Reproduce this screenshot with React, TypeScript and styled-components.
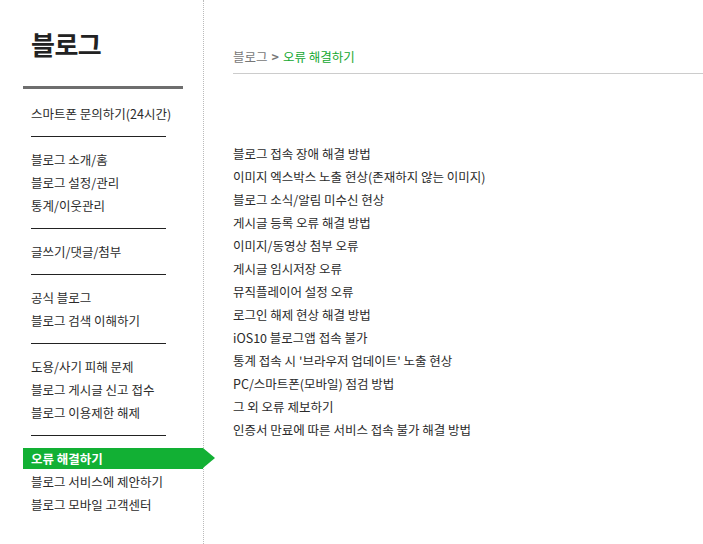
import styled, { createGlobalStyle } from 'styled-components'

const GlobalStyle = createGlobalStyle`
  html, body {
    margin: 0;
    padding: 0;
    background: #fff;
  }
  body {
    font-family: "Noto Sans CJK KR", "Noto Sans", sans-serif;
    font-size: 12.5px;
    color: #2b2b2b;
  }
  ul {
    margin: 0;
    padding: 0;
    list-style: none;
  }
`

const menu: Array<string | null> = [
  '스마트폰 문의하기(24시간)',
  null,
  '블로그 소개/홈',
  '블로그 설정/관리',
  '통계/이웃관리',
  null,
  '글쓰기/댓글/첨부',
  null,
  '공식 블로그',
  '블로그 검색 이해하기',
  null,
  '도용/사기 피해 문제',
  '블로그 게시글 신고 접수',
  '블로그 이용제한 해제',
  null,
  '오류 해결하기',
  '블로그 서비스에 제안하기',
  '블로그 모바일 고객센터',
]

const faq = [
  '블로그 접속 장애 해결 방법',
  '이미지 엑스박스 노출 현상(존재하지 않는 이미지)',
  '블로그 소식/알림 미수신 현상',
  '게시글 등록 오류 해결 방법',
  '이미지/동영상 첨부 오류',
  '게시글 임시저장 오류',
  '뮤직플레이어 설정 오류',
  '로그인 해제 현상 해결 방법',
  'iOS10 블로그앱 접속 불가',
  "통계 접속 시 '브라우저 업데이트' 노출 현상",
  'PC/스마트폰(모바일) 점검 방법',
  '그 외 오류 제보하기',
  '인증서 만료에 따른 서비스 접속 불가 해결 방법',
]

function App(): JSX.Element {
  const active = '오류 해결하기'
  return (
    <>
      <GlobalStyle />
      <Page>
        <Sidebar>
          <Title>블로그</Title>
          <Menu>
            {menu.map((item, i) =>
              item === null ? (
                <Divider key={i} />
              ) : (
                <li key={i}>
                  <MenuLink href="#" $active={item === active}>
                    {item}
                  </MenuLink>
                </li>
              )
            )}
          </Menu>
        </Sidebar>
        <Content>
          <Breadcrumb>
            <span>블로그</span>
            <Chevron>&gt;</Chevron>
            <Current>오류 해결하기</Current>
          </Breadcrumb>
          <FaqList>
            {faq.map((f) => (
              <li key={f}>
                <FaqLink href="#">{f}</FaqLink>
              </li>
            ))}
          </FaqList>
        </Content>
      </Page>
    </>
  )
}

const Page = styled.div`
display: flex;
min-height: 100vh;
`
const Sidebar = styled.aside`
width: 203px;
flex-shrink: 0;
border-right: 1px dotted #bbb;
`
const Title = styled.h1`
margin: 0 0 0 23px;
width: 160px;
padding: 25px 0 23px 8px;
box-sizing: border-box;
font-size: 26px;
line-height: 38px;
font-weight: 700;
color: #222;
letter-spacing: -0.5px;
border-bottom: 3px solid #6e6e6e;
`
const Menu = styled.ul`
&& {
  margin: 13px 0 0 23px;
}
`
const Divider = styled.li`
height: 23px;
display: flex;
align-items: center;
padding-left: 8px;
&::before {
  content: '';
  display: block;
  width: 135px;
  height: 1px;
  background: #222;
}
`
const MenuLink = styled.a<{ $active?: boolean }>`
position: relative;
display: block;
padding-left: 8px;
text-decoration: none;
color: ${(p) => (p.$active ? '#fff' : '#2b2b2b')};
font-weight: ${(p) => (p.$active ? 700 : 400)};
background: ${(p) => (p.$active ? '#12b034' : 'transparent')};
height: ${(p) => (p.$active ? '21px' : '23px')};
line-height: ${(p) => (p.$active ? '21px' : '23px')};
margin: ${(p) => (p.$active ? '1px 0 1px' : '0')};
&::after {
  content: '';
  display: ${(p) => (p.$active ? 'block' : 'none')};
  position: absolute;
  top: 0;
  right: -12px;
  border-left: 12px solid #12b034;
  border-top: 10.5px solid transparent;
  border-bottom: 10.5px solid transparent;
}
`
const Content = styled.main`
flex: 1;
padding-left: 29px;
`
const Breadcrumb = styled.div`
margin-top: 47px;
padding-bottom: 7px;
border-bottom: 1px solid #ccc;
line-height: 19px;
color: #777;
`
const Chevron = styled.span`
margin: 0 4px;
font-weight: 700;
color: #777;
`
const Current = styled.span`
color: #13a830;
`
const FaqList = styled.ul`
&& {
  margin-top: 68px;
}
`
const FaqLink = styled.a`
display: block;
line-height: 23px;
color: #2b2b2b;
text-decoration: none;
`

export default App
